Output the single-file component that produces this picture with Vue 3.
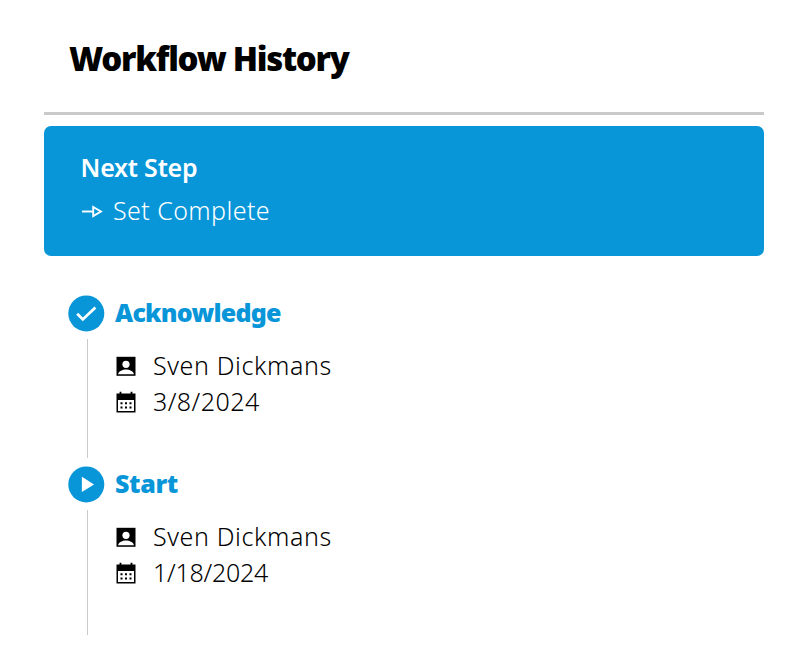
<script setup>
const steps = [
  { title: 'Acknowledge', kind: 'done', person: 'Sven Dickmans', date: '3/8/2024' },
  { title: 'Start', kind: 'start', person: 'Sven Dickmans', date: '1/18/2024' },
]
</script>

<template>
  <main class="page">
    <header class="head"><h1>Workflow History</h1></header>
    <section class="next">
      <h2>Next Step</h2>
      <div class="action">
        <svg width="22" height="16" viewBox="0 0 22 16" fill="none" stroke="#fff">
          <path d="M0 8.5H11" stroke-width="1.9" />
          <path d="M11.2 4 18.9 8.5 11.2 13Z" stroke-width="1.9" />
        </svg>
        <span>Set Complete</span>
      </div>
    </section>
    <ol class="timeline">
      <li v-for="step in steps" :key="step.title" :class="['step', step.kind]">
        <div class="rail">
          <svg class="badge" width="37" height="37" viewBox="0 0 37 37">
            <circle cx="18.3" cy="18.4" r="18" fill="#0896d9" />
            <path v-if="step.kind === 'done'" d="M9.2 18.8 14.8 24.4 27.4 12.4" fill="none" stroke="#fff" stroke-width="2.8" />
            <path v-else d="M13.9 10.8 26 18.4 13.9 26Z" fill="#fff" />
          </svg>
          <div class="line"></div>
        </div>
        <div class="body">
          <h3>{{ step.title }}</h3>
          <div class="row">
            <svg width="20" height="22" viewBox="0 0 20 22">
              <path d="M.5 1.8h19v19H.5z" />
              <circle cx="10" cy="9.3" r="3.6" fill="#fff" />
              <path d="M2 19.2c1-3.1 4.4-4.6 8-4.6s7 1.5 8 4.6z" fill="#fff" />
            </svg>
            <span class="person">{{ step.person }}</span>
          </div>
          <div class="row">
            <svg width="20" height="22" viewBox="0 0 20 22">
              <path d="M.5 2.4H3.6V.8H5.4V2.4H14.6V.8H16.4V2.4H19.5V21.5H.5Z" />
              <path d="M2 9h16v11H2z" fill="#fff" />
              <path d="M4.5 11.2h2v2h-2zm4.5 0h2v2H9zm4.5 0h2v2h-2zM4.5 15.4h2v2h-2zm4.5 0h2v2H9zm4.5 0h2v2h-2z" />
            </svg>
            <span class="date">{{ step.date }}</span>
          </div>
        </div>
      </li>
    </ol>
  </main>
</template>

<style>
body { margin: 0; background: #fff; }
</style>

<style scoped>
.page {
  box-sizing: border-box;
  width: 810px;
  height: 664px;
  padding: 0 46px 0 44px;
  font: 300 25px/34px "Noto Sans", "Open Sans", sans-serif;
  color: #000;
  overflow: hidden;
}
h1, h2, h3 { margin: 0; }
svg { display: block; flex: none; }
span { height: 36px; white-space: nowrap; }
.head {
  box-sizing: border-box;
  height: 115px;
  padding: 35px 0 0 25px;
  border-bottom: 3px solid #cacaca;
}
h1 { font-size: 33px; line-height: 48px; font-weight: 900; letter-spacing: -1.27px; }
.next {
  box-sizing: border-box;
  height: 130px;
  margin-top: 11px;
  padding: 23px 36px;
  border-radius: 7px;
  background: #0896d9;
  color: #fff;
}
h2 { padding-left: .5px; font-size: 25px; line-height: 36px; font-weight: 600; letter-spacing: -.2px; }
.action { display: flex; align-items: center; gap: 9px; height: 36px; margin-top: 8px; padding-left: 2px; letter-spacing: .42px; }
.timeline { margin: 39px 0 0; padding: 0 0 0 24px; list-style: none; }
.step { display: flex; height: 171px; }
.rail { display: flex; flex-direction: column; align-items: flex-start; width: 37px; }
.line { width: 1px; height: 119px; margin: 7px 0 0 19px; background: #cacaca; }
.start .line { height: 125px; }
.body { padding-left: 10px; }
h3 { margin-bottom: 19px; font-size: 25px; line-height: 34px; font-weight: 900; letter-spacing: -.77px; color: #0896d9; }
.start h3 { letter-spacing: -.35px; }
.row { display: flex; align-items: center; gap: 17px; height: 36px; padding-left: 1px; }
.person { letter-spacing: .62px; }
.date { letter-spacing: .45px; }
.start .date { letter-spacing: -.25px; }
</style>
